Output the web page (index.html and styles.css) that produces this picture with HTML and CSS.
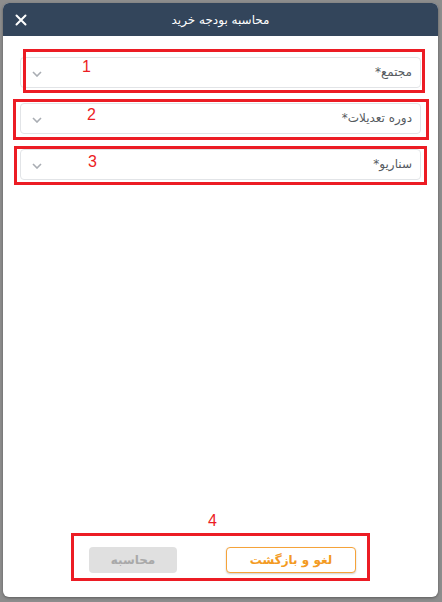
FILE: index.html
```html
<!DOCTYPE html>
<html lang="fa">
<head>
	<meta charset="utf-8">
	<title>محاسبه بودجه خرید</title>
	<link rel="stylesheet" href="styles.css">
</head>
<body>
	<div class="dialog" dir="rtl">
		<div class="header">
			<h2>محاسبه بودجه خرید</h2>
			<button class="close" aria-label="close">
				<svg width="12" height="12" viewBox="0 0 12 12"><path d="M1.5 1.5 L10.5 10.5 M10.5 1.5 L1.5 10.5" stroke="#fff" stroke-width="2" stroke-linecap="round"/></svg>
			</button>
		</div>
		<div class="content">
			<div class="field f1">
				<span class="label">مجتمع*</span>
				<svg class="chev" width="10" height="6" viewBox="0 0 10 6"><path d="M1 1 L5 5 L9 1" fill="none" stroke="#a9adb3" stroke-width="1.6"/></svg>
				<div class="mark m1"><span>1</span></div>
			</div>
			<div class="field f2">
				<span class="label">دوره تعدیلات*</span>
				<svg class="chev" width="10" height="6" viewBox="0 0 10 6"><path d="M1 1 L5 5 L9 1" fill="none" stroke="#a9adb3" stroke-width="1.6"/></svg>
				<div class="mark m2"><span>2</span></div>
			</div>
			<div class="field f3">
				<span class="label">سناریو*</span>
				<svg class="chev" width="10" height="6" viewBox="0 0 10 6"><path d="M1 1 L5 5 L9 1" fill="none" stroke="#a9adb3" stroke-width="1.6"/></svg>
				<div class="mark m3"><span>3</span></div>
			</div>
		</div>
		<div class="footer">
			<div class="buttons">
				<button class="cancel">لغو و بازگشت</button>
				<button class="calc" disabled>محاسبه</button>
				<div class="mark m4"><span>4</span></div>
			</div>
		</div>
	</div>
</body>
</html>
```
FILE: styles.css
```css
*{
	margin:0;
	padding:0;
	box-sizing:border-box;
	font-family:"DejaVu Sans", sans-serif;
}

body{
	background:#8d8d8d;
	padding:3px 4px 5px 3px;
	height:602px;
	overflow:hidden;
}

.dialog{
	width:435px;
	height:594px;
	background:white;
	border-radius:6px;
	overflow:hidden;
	display:flex;
	flex-direction:column;
	box-shadow:0 1px 3px rgba(0,0,0,0.35);
}

.header{
	height:33px;
	background:#33455b;
	display:flex;
	align-items:center;
	justify-content:center;
	position:relative;
}

.header h2{
	color:white;
	font-size:12px;
	font-weight:normal;
	margin-top:1px;
}

.close{
	position:absolute;
	left:12px;
	top:11px;
	border:none;
	background:none;
	display:flex;
}

.content{
	flex:1;
	padding:21px 17px 0 17px;
}

.field{
	position:relative;
	height:31px;
	border:1px solid #e2e4e7;
	border-radius:4px;
	display:flex;
	align-items:center;
	justify-content:space-between;
	padding:0 8px 0 11px;
	margin-bottom:15px;
}

.label{
	font-size:12px;
	color:#555a60;
	margin-top:-1px;
}

.chev{
	margin-top:2px;
}

.mark{
	position:absolute;
	border:3px solid #ec1c24;
	pointer-events:none;
}

.mark span{
	position:absolute;
	color:#ec1c24;
	font-family:"Liberation Sans", sans-serif;
	font-size:16px;
	line-height:16px;
}

.m1{ top:-9px; bottom:-6px; left:2px; right:-5px; }
.m1 span{ left:56px; top:7px; }
.m2{ top:-5px; bottom:-7px; left:-8px; right:-9px; }
.m2 span{ left:71px; top:5px; }
.m3{ top:-4px; bottom:-6px; left:-7px; right:-7px; }
.m3 span{ left:71px; top:5px; }

.footer{
	padding:0 0 24px 0;
	display:flex;
	justify-content:center;
}

.buttons{
	position:relative;
	display:flex;
	gap:49px;
	margin-left:4px;
}

.buttons button{
	height:26px;
	border-radius:4px;
	font-size:12px;
	font-weight:bold;
}

.cancel{
	width:130px;
	background:white;
	color:#f39a22;
	border:1.5px solid #f5a33a;
	box-shadow:0 1px 2px rgba(0,0,0,0.2);
}

.calc{
	width:88px;
	background:#e0e0e0;
	color:#a9a9a9;
	border:none;
}

.m4{ top:-14px; bottom:-8px; left:-18px; right:-14px; }
.m4 span{ left:134px; top:-23px; }
```
